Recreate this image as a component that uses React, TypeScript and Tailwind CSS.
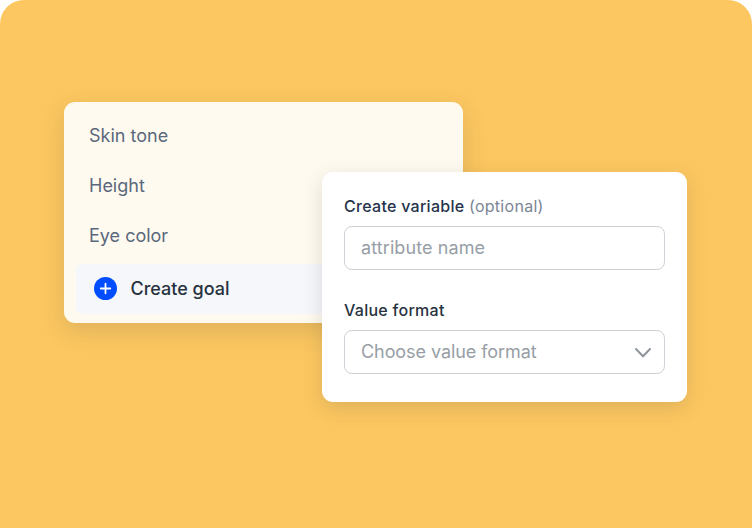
const attributes = ['Skin tone', 'Height', 'Eye color'];

const PlusBadge = () => (
  <svg viewBox="0 0 23 23" className="w-[23px] h-[23px] shrink-0">
    <circle cx="11.5" cy="11.5" r="11.5" fill="#004cff" />
    <path d="M11.5 6.7v9.6M6.7 11.5h9.6" stroke="#ffffff" strokeWidth="1.8" strokeLinecap="round" />
  </svg>
);

const Chevron = () => (
  <svg viewBox="0 0 18 11" className="w-[18px] h-[11px] shrink-0 mt-[3px]" fill="none">
    <path d="M2 2L9 9.2L16 2" stroke="#8d949b" strokeWidth="2" strokeLinecap="round" />
  </svg>
);

const AttributeList = () => (
  <div className="w-[398.5px] h-[221px] rounded-[11px] bg-[#fffaef] px-3 pt-2 shadow-[0_8px_24px_rgba(60,60,60,0.16)]">
    <ul className="px-[13px]">
      {attributes.map((name) => (
        <li key={name} className="h-[50px] flex items-center text-[18px] text-[#5a687c]">
          {name}
        </li>
      ))}
    </ul>
    <button className="mt-1 w-full h-[50px] rounded-md bg-[#f5f7fa] flex items-center gap-[13.5px] pl-[18px] pb-[2px] text-[18px] font-medium text-[#27323f]">
      <PlusBadge />
      Create goal
    </button>
  </div>
);

const VariableForm = () => (
  <div className="absolute left-[322px] top-[172px] w-[365px] h-[230px] rounded-[11px] bg-white px-[22px] pt-[22px] shadow-[0_6px_20px_rgba(60,60,60,0.16)]">
    <div className="h-6 text-[16px] leading-6 tracking-[0.28px] font-medium text-[#26334a]">
      Create variable <span className="font-normal text-[#7b8594]">(optional)</span>
    </div>
    <input
      type="text"
      placeholder="attribute name"
      className="mt-[8px] block w-[321px] h-[44px] rounded-[8px] border border-[#ced1d6] px-4 pb-[2px] text-[18px] tracking-[0.1px] text-[#26334a] placeholder:text-[#979ea6] outline-none"
    />
    <div className="mt-[28px] h-6 text-[16px] leading-6 tracking-[0.28px] font-medium text-[#27323f]">Value format</div>
    <button className="mt-[8px] w-[321px] h-[44px] rounded-[8px] border border-[#ced1d6] pl-4 pr-3 pb-[2px] flex items-center justify-between text-[18px] tracking-[-0.07px] text-[#979ea6]">
      Choose value format
      <Chevron />
    </button>
  </div>
);

const App = () => {
  return (
    <div className="bg-white font-['Inter',sans-serif]">
      <div className="relative w-[752px] h-[528px] rounded-t-[24px] bg-[#fcc760] pl-16 pt-[102px] overflow-hidden">
        <AttributeList />
        <VariableForm />
      </div>
    </div>
  );
};

export default App;
